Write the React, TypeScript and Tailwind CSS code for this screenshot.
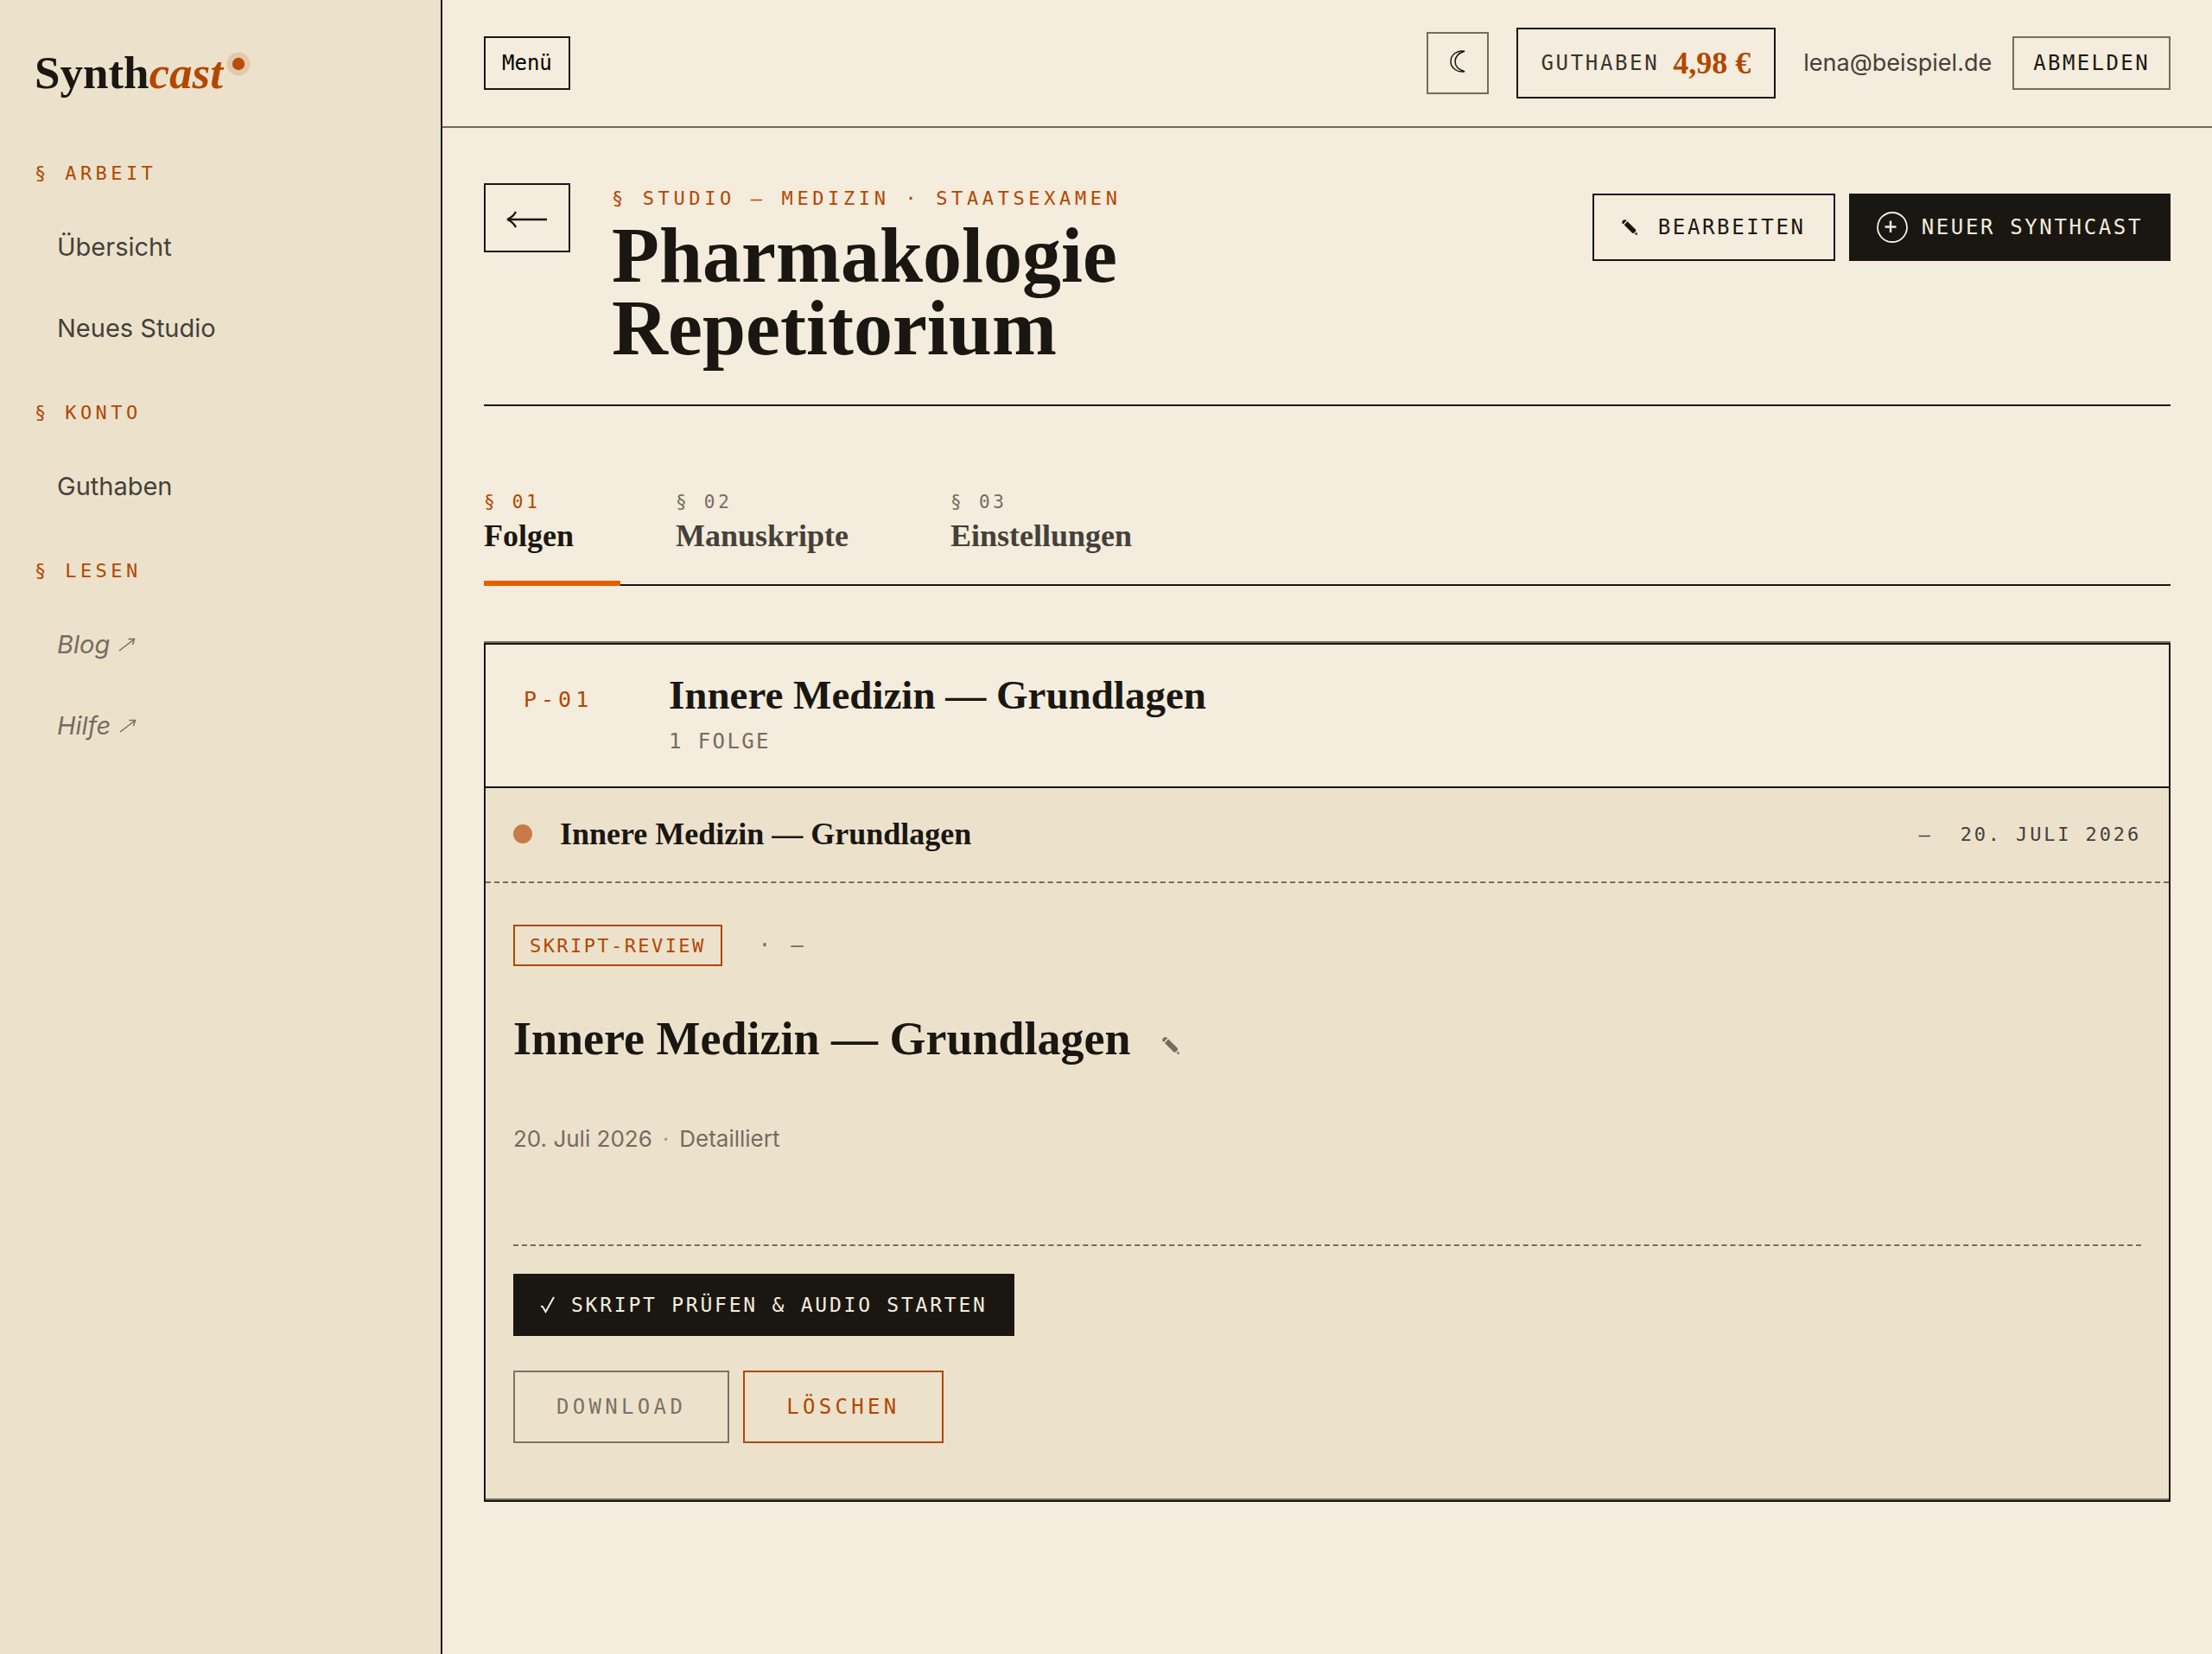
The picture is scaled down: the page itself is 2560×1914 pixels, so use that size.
import { useState } from 'react';

const MONO = "font-['DejaVu_Sans_Mono',monospace]";
const SERIF = "font-['Liberation_Serif',serif] font-bold";

type NavItem = { label: string; external?: boolean };

const SECTIONS: { title: string; items: NavItem[] }[] = [
  { title: 'Arbeit', items: [{ label: 'Übersicht' }, { label: 'Neues Studio' }] },
  { title: 'Konto', items: [{ label: 'Guthaben' }] },
  {
    title: 'Lesen',
    items: [
      { label: 'Blog', external: true },
      { label: 'Hilfe', external: true },
    ],
  },
];

const TABS = [
  { id: 'folgen', num: '01', label: 'Folgen' },
  { id: 'manuskripte', num: '02', label: 'Manuskripte' },
  { id: 'einstellungen', num: '03', label: 'Einstellungen' },
];

/* ── Icons ── */
function PencilIcon({ className }: { className: string }) {
  return (
    <svg viewBox="0 0 20 20" className={className} fill="currentColor" aria-hidden="true">
      <path d="M.4 4.600C-.4 2 2-.2 4.600.3Q5.800.6 6 1.500L2 5.800Q.8 5.600.4 4.600Z" />
      <path d="M7.200 2.400 18.200 13.200 17.600 15.600 16 17.200 13.800 17.800 2.900 7Z" />
      <path d="M19 16.200 20 20 16.400 18.900Z" />
    </svg>
  );
}

function ExternalArrow() {
  return (
    <svg
      width="20"
      height="16"
      viewBox="0 0 20 16"
      fill="none"
      stroke="currentColor"
      strokeWidth="1.5"
      aria-hidden="true"
    >
      <path d="M1 15 18 2" />
      <path d="M11.5 1.5H18.5L16.5 8" />
    </svg>
  );
}

function Sidebar() {
  return (
    <aside className="w-[512px] shrink-0 border-r-2 border-[#1a1712] bg-[#ece2cc] px-10 pt-[52px]">
      <a href="#" className="flex items-start text-[53px] leading-[64px]">
        <span className={SERIF}>
          Synth<em className="text-[#b34700]">cast</em>
        </span>
        <svg width="28" height="28" viewBox="0 0 28 28" className="mt-2 ml-1" aria-hidden="true">
          <circle cx="14" cy="14" r="13.5" fill="#e5c8ab" />
          <circle cx="14" cy="14" r="7.2" fill="#b84d0e" />
        </svg>
      </a>

      <nav className="mt-[34px]">
        {SECTIONS.map((section) => (
          <div key={section.title} className="pt-[33px]">
            <h2 className={`${MONO} text-[22px] leading-9 tracking-[0.2em] uppercase text-[#b34700]`}>
              § {section.title}
            </h2>
            <ul className="mt-5">
              {section.items.map((item) => (
                <li key={item.label}>
                  <a
                    href="#"
                    className={`flex h-[94px] items-center gap-2.5 px-[26px] text-[29px] ${
                      item.external ? 'italic text-[#766b5f]' : 'text-[#45403a]'
                    }`}
                  >
                    {item.label}
                    {item.external && <ExternalArrow />}
                  </a>
                </li>
              ))}
            </ul>
          </div>
        ))}
      </nav>
    </aside>
  );
}

function TopBar() {
  return (
    <header className="flex h-[148px] items-center justify-between border-b-2 border-[#766b5f] px-12">
      <button type="button" className={`${MONO} h-[62px] border-2 border-[#1a1712] px-[19px] text-[24px] text-black`}>
        Menü
      </button>
      <div className="flex items-center gap-8">
        <button
          type="button"
          aria-label="Dunkles Design"
          className="flex size-[72px] items-center justify-center border-2 border-[#766b5f] pb-1"
        >
          <svg
            width="18"
            height="26"
            viewBox="0 0 18 26"
            fill="none"
            stroke="currentColor"
            strokeWidth="1.5"
            aria-hidden="true"
          >
            <path d="M17 1.300C8-.2 1 5.500 1 13S8 26.200 17 24.700C10 22.500 6 18.500 6 13S10 3.500 17 1.300Z" />
          </svg>
        </button>
        <a href="#" className="flex h-[82px] items-center gap-4 border-2 border-[#1a1712] px-[27px]">
          <span className={`${MONO} text-[24px] tracking-[0.11em] uppercase text-[#3a332c]`}>Guthaben</span>
          <span className={`${SERIF} text-[36px] leading-none text-[#b34700]`}>4,98 €</span>
        </a>
        <div className="flex items-center gap-6">
          <span className="text-[27px] text-[#45403a]">lena@beispiel.de</span>
          <button
            type="button"
            className={`${MONO} h-[62px] border-2 border-[#766b5f] px-[22px] text-[24px] tracking-[0.1em] uppercase`}
          >
            Abmelden
          </button>
        </div>
      </div>
    </header>
  );
}

function StudioHeader() {
  return (
    <div className="flex items-start justify-between border-b-2 border-[#1a1712] pb-[46px]">
      <div className="flex items-start gap-12">
        <button
          type="button"
          aria-label="Zurück"
          className="flex h-20 w-[100px] items-center justify-center border-2 border-[#1a1712] pt-1"
        >
          <svg width="48" height="20" viewBox="0 0 48 20" aria-hidden="true">
            <path d="M1 10Q8 7 11 1" fill="none" stroke="currentColor" strokeWidth="2.4" />
            <path d="M1 10Q8 13 11 19" fill="none" stroke="currentColor" strokeWidth="2.4" />
            <path d="M2 10H47" stroke="currentColor" strokeWidth="2.6" />
          </svg>
        </button>
        <div>
          <p className={`${MONO} text-[22px] leading-9 tracking-[0.21em] uppercase text-[#b34700]`}>
            § Studio — Medizin · Staatsexamen
          </p>
          <h1 className={`${SERIF} mt-1.5 text-[90px] leading-[84px]`}>
            Pharmakologie
            <br />
            Repetitorium
          </h1>
        </div>
      </div>

      <div className={`${MONO} flex gap-4 pt-3 text-[24px] tracking-[0.11em]`}>
        <button type="button" className="flex h-[78px] items-center gap-6 border-2 border-[#1a1712] px-8 uppercase">
          <PencilIcon className="size-[18px]" />
          Bearbeiten
        </button>
        <button
          type="button"
          className="flex h-[78px] items-center gap-4 bg-[#1a1712] px-8 uppercase text-[#f4ecdc]"
        >
          <svg
            width="36"
            height="36"
            viewBox="0 0 36 36"
            fill="none"
            stroke="currentColor"
            strokeWidth="1.8"
            aria-hidden="true"
          >
            <circle cx="18" cy="18" r="17" />
            <path d="M9.500 17.500H22.500M16 10.500V24" strokeWidth="2.4" />
          </svg>
          Neuer Synthcast
        </button>
      </div>
    </div>
  );
}

function EpisodeCard() {
  return (
    <section className="mt-16 border-t-2 border-[#766b5f]">
      <article className="border-2 border-[#1a1712]">
        <div className="flex items-start border-b-2 border-[#1a1712] pt-[30px] pb-9 pl-11">
          <span className={`${MONO} mt-[18px] w-[168px] text-[25px] leading-8 tracking-[0.2em] text-[#b34700]`}>
            P-01
          </span>
          <div>
            <h2 className={`${SERIF} text-[47px] leading-[56px]`}>Innere Medizin — Grundlagen</h2>
            <p className={`${MONO} mt-2.5 text-[24px] leading-8 tracking-[0.1em] uppercase text-[#766b5f]`}>1 Folge</p>
          </div>
        </div>

        <div className="border-b-2 border-[#766b5f] bg-[#ece2cc]">
          <div className="flex h-[110px] items-center border-b-2 border-dashed border-[#766b5f] px-8 pb-0.5">
            <span className="size-[22px] rounded-full bg-[#c87b4a]" />
            <h3 className={`${SERIF} ml-8 text-[36px]`}>Innere Medizin — Grundlagen</h3>
            <div className={`${MONO} ml-auto flex gap-8 text-[22px] tracking-[0.13em] uppercase text-[#45403a]`}>
              <span>—</span>
              <time dateTime="2026-07-20">20. Juli 2026</time>
            </div>
          </div>

          <div className="px-8 pt-12 pb-16">
            <div className={`${MONO} flex items-center gap-[42px]`}>
              <span className="flex h-12 items-center border-2 border-[#b34700] px-[17px] text-[22px] tracking-[0.11em] uppercase text-[#b34700]">
                Skript-Review
              </span>
              <span className="text-[24px] tracking-[0.18em] text-[#766b5f]">· —</span>
            </div>

            <div className="mt-[52px] flex items-center gap-9">
              <h2 className={`${SERIF} text-[54px] leading-[64px]`}>Innere Medizin — Grundlagen</h2>
              <button type="button" aria-label="Titel bearbeiten" className="pt-4 text-[#766b5f]">
                <PencilIcon className="size-5" />
              </button>
            </div>

            <p className="mt-16 flex gap-3 text-[26px] leading-10 text-[#766b5f]">
              <time dateTime="2026-07-20">20. Juli 2026</time>
              <span className="opacity-60">·</span>
              <span>Detailliert</span>
            </p>

            <div className={`${MONO} mt-[102px] border-t-2 border-dashed border-[#766b5f] pt-8`}>
              <button
                type="button"
                className="flex h-[72px] items-center gap-[19px] bg-[#1a1712] px-[31px] text-[23px] tracking-[0.12em] uppercase text-[#f4ecdc]"
              >
                <svg
                  width="17"
                  height="20"
                  viewBox="0 0 17 20"
                  fill="none"
                  stroke="currentColor"
                  strokeWidth="2"
                  aria-hidden="true"
                >
                  <path d="M1 11.500 3 12 6.500 18 16 1" />
                </svg>
                Skript prüfen &amp; Audio starten
              </button>
              <div className="mt-10 flex gap-4 text-[24px] tracking-[0.18em]">
                <button
                  type="button"
                  disabled
                  className="h-[84px] border-2 border-[#7d7265] px-12 uppercase text-[#7d7265]"
                >
                  Download
                </button>
                <button type="button" className="h-[84px] border-2 border-[#b34700] px-12 uppercase text-[#b34700]">
                  Löschen
                </button>
              </div>
            </div>
          </div>
        </div>
      </article>
    </section>
  );
}

export default function App() {
  const [tab, setTab] = useState('folgen');

  return (
    <div className="flex min-h-screen bg-[#f4ecdc] font-['Inter',sans-serif] text-[#1a1712]">
      <Sidebar />
      <div className="min-w-0 flex-1">
        <TopBar />
        <main className="px-12 pt-16 pb-24">
          <StudioHeader />

          <div role="tablist" className="mt-24 flex gap-16 border-b-2 border-[#1a1712]">
            {TABS.map((t) => {
              const active = t.id === tab;
              return (
                <button
                  key={t.id}
                  type="button"
                  role="tab"
                  aria-selected={active}
                  onClick={() => setTab(t.id)}
                  className={`-mb-0.5 border-b-6 pr-[54px] pb-7 text-left ${
                    active ? 'border-[#e85d00]' : 'border-transparent text-[#45403a]'
                  }`}
                >
                  <span
                    className={`${MONO} block text-[21px] leading-[30px] tracking-[0.18em] ${
                      active ? 'text-[#b34700]' : 'text-[#766b5f]'
                    }`}
                  >
                    § {t.num}
                  </span>
                  <span className={`${SERIF} block text-[36px] leading-[48px]`}>{t.label}</span>
                </button>
              );
            })}
          </div>

          <EpisodeCard />
        </main>
      </div>
    </div>
  );
}
